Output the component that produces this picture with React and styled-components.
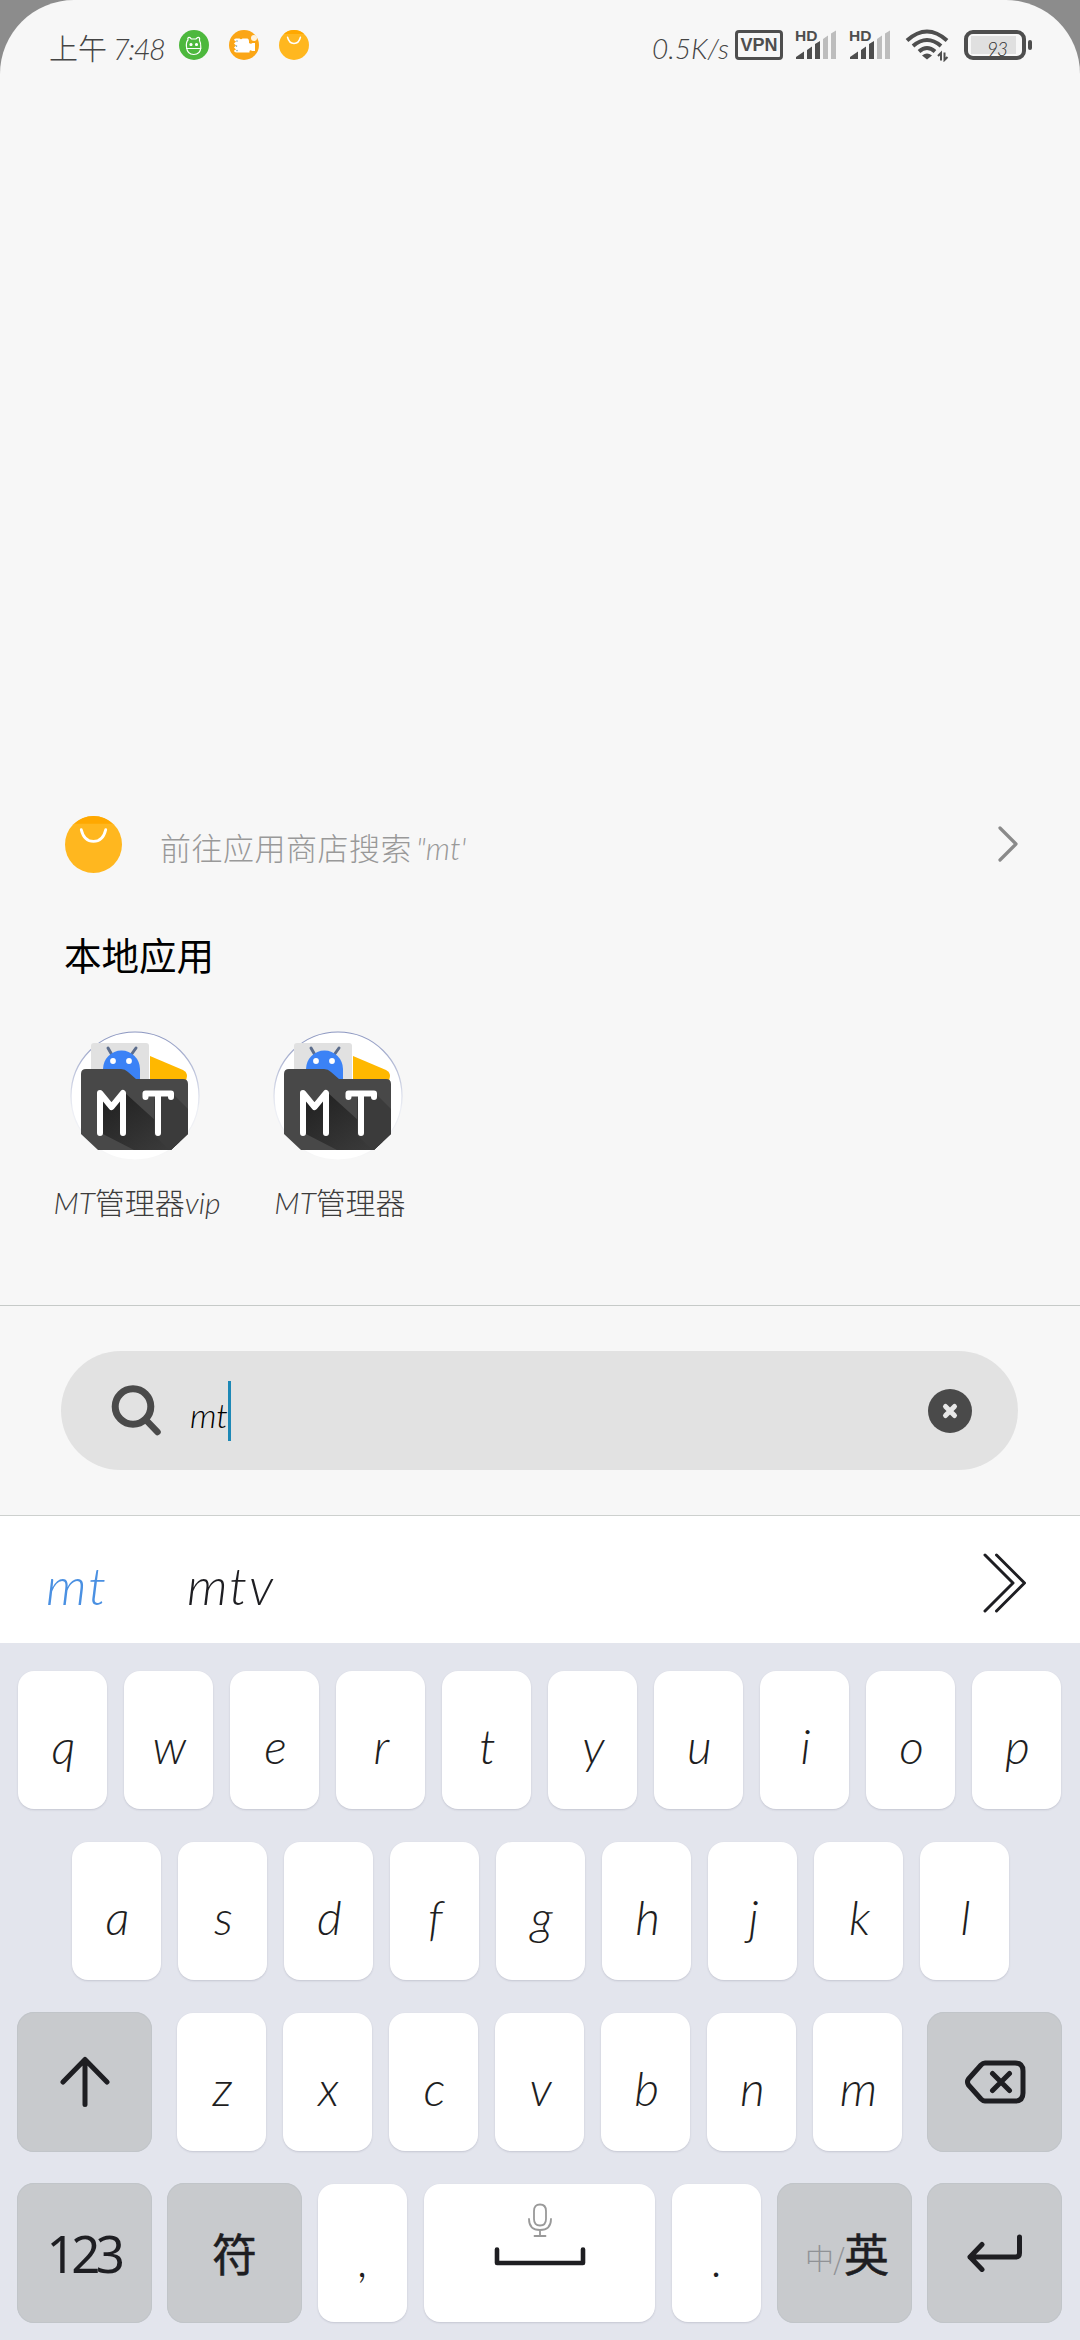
import React from "react";
import styled, { createGlobalStyle } from "styled-components";

const INK = "#1e1e22";
const STATUS = "#4e4e4e";

const GlobalStyle = createGlobalStyle`
  html, body { margin: 0; background: #8c8c8c; }
  * { box-sizing: border-box; }
  svg { display: block; flex: none; }
`;

const Screen = styled.main`
  width: 1080px;
  height: 2340px;
  display: flex;
  flex-direction: column;
  overflow: hidden;
  background: #f7f7f7;
  border-radius: 74px 74px 0 0;
  font-family: Lato, "Noto Sans CJK SC", sans-serif;
  font-weight: 300;
`;

/* Latin runs lean like handwriting, Chinese runs stay upright */
const Slant = styled.span`
  font-style: italic;
  letter-spacing: ${(p) => p.$track || 0}px;
  margin-left: ${(p) => p.$lead || 0}px;
`;

/* ---------- status bar ---------- */
const StatusBar = styled.header`
  height: 90px;
  padding: 0 48px 0 49px;
  display: flex;
  align-items: center;
  justify-content: space-between;
  color: #444;
`;
const StatusGroup = styled.div`
  display: flex;
  align-items: center;
`;
const Clock = styled.div`
  width: 130px;
  padding-top: 8px;
  font-size: 29px;
  line-height: 40px;
  white-space: nowrap;
`;
const Badges = styled.div`
  display: flex;
  gap: 20px;
`;
const Speed = styled.div`
  width: 83px;
  padding-top: 6px;
  font-size: 28px;
  line-height: 40px;
  white-space: nowrap;
`;
const Vpn = styled.div`
  width: 48px;
  height: 30px;
  margin-right: 12px;
  border: 3px solid ${STATUS};
  border-radius: 4px;
  display: flex;
  align-items: center;
  justify-content: center;
  color: ${STATUS};
  font: 700 18px/20px "Liberation Sans", sans-serif;
`;
const SignalBox = styled.div`
  width: 42px;
  height: 30px;
  margin-right: 12px;
  display: grid;
  & > * { grid-area: 1 / 1; }
`;
const Hd = styled.span`
  color: ${STATUS};
  font: 700 15.5px/11px "Liberation Sans", sans-serif;
`;
const Battery = styled.div`
  width: 62px;
  height: 30px;
  margin-left: 15px;
  padding: 2px 3px;
  border: 4px solid ${STATUS};
  border-radius: 9px;
`;
const Charge = styled.div`
  width: 45px;
  height: 18px;
  background: #e0e0e0;
  padding: 5px 0 0 16px;
  font-size: 19px;
  line-height: 16px;
  color: #333;
`;
const BatteryTip = styled.div`
  width: 4px;
  height: 10px;
  margin-left: 2px;
  border-radius: 2px;
  background: ${STATUS};
`;

/* ---------- results ---------- */
const Results = styled.section`
  height: 1215px;
  display: flex;
  flex-direction: column;
  justify-content: flex-end;
  padding: 0 61px 84px 65px;
`;
const StoreRow = styled.div`
  height: 58px;
  display: flex;
  align-items: center;
`;
const StoreText = styled.div`
  flex: 1;
  padding: 8px 0 0 38px;
  font-size: 31px;
  line-height: 44px;
  letter-spacing: 0.5px;
  color: #999;
`;
const Heading = styled.h2`
  margin: 59px 0 0 -1px;
  font-size: 37.5px;
  line-height: 48px;
  font-weight: 400;
  color: #000;
`;
const AppGrid = styled.div`
  display: flex;
  margin: 51px 0 0 -32px;
`;
const AppCell = styled.div`
  width: 203px;
  display: flex;
  flex-direction: column;
  align-items: center;
`;
const AppLabel = styled.div`
  margin-top: 22px;
  padding-left: 5px;
  font-size: 30px;
  line-height: 38px;
  color: #3c3c3c;
  white-space: nowrap;
`;

/* ---------- search ---------- */
const SearchArea = styled.section`
  height: 211px;
  padding: 45px 62px 0 61px;
  border-top: 1px solid #c6cac8;
  border-bottom: 1px solid #cdd0ce;
`;
const SearchPill = styled.div`
  height: 119px;
  border-radius: 60px;
  padding: 0 46px 0 50px;
  display: flex;
  align-items: center;
  background: #e2e2e2;
`;
const Query = styled.div`
  flex: 1;
  display: flex;
  align-items: center;
  padding-left: 29px;
  color: #000;
`;
const QueryText = styled.span`
  width: 38px;
  padding-top: 8px;
  font-size: 34px;
  line-height: 40px;
  font-style: italic;
`;
const Caret = styled.span`
  width: 3px;
  height: 60px;
  background: #1d88b6;
`;

/* ---------- keyboard ---------- */
const Candidates = styled.div`
  height: 127px;
  padding: 0 52px 0 46px;
  display: flex;
  align-items: center;
  background: #fff;
`;
const Candidate = styled.span`
  width: ${(p) => p.$w}px;
  padding-top: 11px;
  font-size: 52px;
  line-height: 60px;
  font-style: italic;
  letter-spacing: 2px;
  color: ${(p) => (p.$active ? "#4a90e2" : INK)};
`;
const More = styled.span`
  margin: 7px 0 0 auto;
`;
const Keyboard = styled.section`
  flex: 1;
  padding-top: 27px;
  display: flex;
  flex-direction: column;
  gap: 31px;
  background: #e3e5ed;
`;
const Row = styled.div`
  height: 140px;
  padding-left: ${(p) => p.$inset || 17}px;
  display: flex;
  align-items: center;
  gap: 15px;
`;
const Key = styled.div`
  width: ${(p) => p.$w || 89}px;
  height: 138px;
  margin: 0 1px;
  padding: 11px 0 0 2px;
  display: flex;
  align-items: center;
  justify-content: center;
  border-radius: 16px;
  background: #fff;
  box-shadow: 0 1px 2px rgba(60, 60, 90, 0.18);
  color: ${INK};
  font-size: 48px;
  line-height: 60px;
  font-style: italic;
`;
const SpaceKey = styled(Key)`
  padding: 19px 0 0;
  flex-direction: column;
  justify-content: flex-start;
  gap: 9px;
`;
const FnKey = styled.div`
  width: 135px;
  height: 140px;
  margin: 0 ${(p) => p.$after || 0}px 0 ${(p) => p.$before || 0}px;
  display: flex;
  align-items: center;
  justify-content: center;
  border-radius: 17px;
  background: #c8cacd;
  box-shadow: inset 0 0 0 1px #c1c5c9;
  color: ${INK};
`;
const Digits = styled.span`
  margin-right: 2px;
  font: 400 51px/60px "Noto Sans", sans-serif;
  letter-spacing: -4.500px;
`;
const Hanzi = styled.span`
  font: 400 45px/60px "Noto Sans CJK SC", sans-serif;
  -webkit-text-stroke: 0.5px ${INK};
`;
const Other = styled.span`
  margin-left: 5px;
  padding-top: 7px;
  font: 300 29px/50px "Noto Sans CJK SC", sans-serif;
  letter-spacing: -0.800px;
  color: #909296;
`;

function MonsterBadge() {
  return (
    <svg width="30" height="30" viewBox="0 0 30 30" fill="none" stroke="#fff" strokeWidth="1.2">
      <circle cx="15" cy="15" r="15" fill="#4db83d" stroke="none" />
      <path d="M7.5 17C7 13 8 11 9 10L8.8 8.2Q9.5 7 11 7.6L12.3 9H17L18.5 7.6Q20 7 20.6 8.2L20.5 10.5Q22 13 21.8 17.5C21.5 22 19 24.5 14.7 24.5S8 22 7.5 17ZM7 18.5H22.4" />
      <circle cx="12" cy="14.5" r="1" fill="#fff" />
      <circle cx="17.5" cy="14.5" r="1" fill="#fff" />
    </svg>
  );
}

function PuzzleBadge() {
  return (
    <svg width="30" height="30" viewBox="0 0 30 30">
      <circle cx="15" cy="15" r="15" fill="#fba616" />
      <circle cx="25" cy="8" r="3" fill="#fff3dd" />
      <path d="M5 10Q5 8.500 7 8.500H10.500Q12 10 13.500 8.500H18.500Q20 9 20 11V13Q22 14.500 23.500 13H26V21H23Q21.500 19.500 20.500 21V22.500H7.500Q5 22.500 5 20.500L7 19.500L5 17.500L7 15.500L5 13.500L7 11.500Z" fill="#fff" />
      <path d="M8 11v.1M7.500 16v.1M8 20.500v.1" stroke="#7ea9b5" strokeWidth="1.600" strokeLinecap="round" />
    </svg>
  );
}

function StoreBadge({ size }) {
  return (
    <svg width={size} height={size} viewBox="0 0 56 56" fill="none">
      <circle cx="28" cy="28" r="28" fill="#ffb71f" />
      <path d="M9 7.500A28 28 0 0 1 47 7.500Z" fill="#ffa800" />
      <path d="M16 13.500C18 22 23 25 28 25S38 22 40 13.500" stroke="#fff" strokeWidth="2.800" strokeLinecap="round" />
    </svg>
  );
}

function Signal() {
  return (
    <SignalBox>
      <Hd>HD</Hd>
      <svg width="42" height="30" viewBox="0 0 42 30">
        <path fill={STATUS} d="M1 29V27L9 21.500V29ZM12 29V20L17 16.500V29ZM20 29V14L25 11V29Z" />
        <path fill="#bdbdbd" d="M28 29V9L33 5.500V29ZM36 29V3.500L41 .5V29Z" />
      </svg>
    </SignalBox>
  );
}

function Wifi() {
  return (
    <svg width="46" height="34" viewBox="-2 0 46 34" fill="none" stroke={STATUS} strokeWidth="4">
      <path d="M2 12.500Q22-5.500 42 12.500M8 18Q22 6 36 18M14 23.500Q22 16.500 30 23.500" />
      <path d="M22 31.500L17 27.500Q22 23.500 27 27.500Z" fill={STATUS} stroke="none" />
      <path d="M36 32.500V25L33 28M39.500 24.500V32L42.500 29" strokeWidth="2" />
    </svg>
  );
}

function AppIcon({ id }) {
  return (
    <svg width="130" height="130" viewBox="0 0 130 130">
      <defs>
        <linearGradient id={`${id}-shade`} x1="0" y1="0" x2="1" y2="1">
          <stop offset="0" stopColor="#1f1f1f" />
          <stop offset="1" stopColor="#3e3e3e" />
        </linearGradient>
        <linearGradient id={`${id}-rim`} x1="0" y1="0" x2="0" y2="1">
          <stop offset="0" stopColor="#8b96c0" />
          <stop offset=".6" stopColor="#eceef4" />
          <stop offset="1" stopColor="#f7f7f7" />
        </linearGradient>
        <clipPath id={`${id}-body`}>
          <path d="M11 43Q11 38 16 38H51Q55 38 58 41L66 48H113Q118 48 118 53V103L101 119H28L11 103Z" />
        </clipPath>
      </defs>
      <circle cx="65" cy="65" r="64" fill="#fff" stroke={`url(#${id}-rim)`} strokeWidth="1.200" />
      <path d="M21 15Q21 12 24 12H76Q79 12 79 15V55H21Z" fill="#e1e1e1" />
      <path d="M80 25L113 39Q117 41 117 45L116 50H80Z" fill="#ffb800" />
      <path d="M38 17L42 24M66 17L61 24" stroke="#5c6d8c" strokeWidth="3" strokeLinecap="round" />
      <path d="M33 48V38A18.500 18.500 0 0 1 70 38V50H33Z" fill="#3b82f6" />
      <circle cx="43" cy="30" r="2.900" fill="#fff" />
      <circle cx="59" cy="30" r="2.900" fill="#fff" />
      <path d="M11 43Q11 38 16 38H51Q55 38 58 41L66 48H113Q118 48 118 53V103L101 119H28L11 103Z" fill="#484848" />
      <g clipPath={`url(#${id}-body)`}>
        <path d="M54 61L118 119H64L29 101V65L40 78Z" fill={`url(#${id}-shade)`} />
        <path d="M101 61L125 85V125H105L84 104V68Z" fill="#3b3b3b" />
      </g>
      <path d="M30 102V62L41.500 76L53 62V102" fill="none" stroke="#fff" strokeWidth="6" strokeLinecap="round" strokeLinejoin="round" />
      <path d="M75.500 66V62.500H101V66M88 63V102" fill="none" stroke="#fff" strokeWidth="6" strokeLinecap="round" strokeLinejoin="round" />
    </svg>
  );
}

function Stroke({ w, h, d, width = 5, color = INK }) {
  return (
    <svg width={w} height={h} viewBox={`0 0 ${w} ${h}`} fill="none" stroke={color} strokeWidth={width} strokeLinecap="round" strokeLinejoin="round">
      <path d={d} />
    </svg>
  );
}

const Letters = ({ text }) => [...text].map((c) => <Key key={c}>{c}</Key>);

export default function App() {
  return (
    <>
      <GlobalStyle />
      <Screen>
        <StatusBar>
          <StatusGroup>
            <Clock>上午<Slant $lead={6} $track={-1.5}>7:48</Slant></Clock>
            <Badges>
              <MonsterBadge />
              <PuzzleBadge />
              <StoreBadge size={30} />
            </Badges>
          </StatusGroup>
          <StatusGroup>
            <Speed><Slant>0.5K/s</Slant></Speed>
            <Vpn>VPN</Vpn>
            <Signal />
            <Signal />
            <Wifi />
            <Battery><Charge><Slant $track={-1}>93</Slant></Charge></Battery>
            <BatteryTip />
          </StatusGroup>
        </StatusBar>

        <Results>
          <StoreRow>
            <StoreBadge size={57} />
            <StoreText>前往应用商店搜索<Slant $lead={4}>"mt'</Slant></StoreText>
            <Stroke w={22} h={38} d="M3 3L19 19L3 35" width={3.2} color="#8a8a8a" />
          </StoreRow>
          <Heading>本地应用</Heading>
          <AppGrid>
            <AppCell>
              <AppIcon id="vip" />
              <AppLabel><Slant>MT</Slant>管理器<Slant>vip</Slant></AppLabel>
            </AppCell>
            <AppCell>
              <AppIcon id="std" />
              <AppLabel><Slant>MT</Slant>管理器</AppLabel>
            </AppCell>
          </AppGrid>
        </Results>

        <SearchArea>
          <SearchPill>
            <svg width="50" height="52" viewBox="0 0 50 52" fill="none" stroke="#4a4a4a" strokeLinecap="round">
              <circle cx="22" cy="21.500" r="17.800" strokeWidth="7" />
              <path d="M35 35L46.500 47" strokeWidth="6.500" />
            </svg>
            <Query>
              <QueryText>mt</QueryText>
              <Caret />
            </Query>
            <svg width="44" height="44" viewBox="0 0 44 44">
              <circle cx="22" cy="22" r="22" fill="#4a4a4a" />
              <path d="M17.500 17.500L26.500 26.500M26.500 17.500L17.500 26.500" stroke="#e8e8e8" strokeWidth="5" strokeLinecap="round" />
            </svg>
          </SearchPill>
        </SearchArea>

        <Candidates>
          <Candidate $w={141} $active>mt</Candidate>
          <Candidate $w={100}>mtv</Candidate>
          <More>
            <Stroke w={46} h={62} d="M3 3L31 31L3 59M14.500 3L42.500 31L14.500 59" width={3} />
          </More>
        </Candidates>

        <Keyboard>
          <Row><Letters text="qwertyuiop" /></Row>
          <Row $inset={71}><Letters text="asdfghjkl" /></Row>
          <Row>
            <FnKey $after={9}><Stroke w={50} h={52} d="M25 48.500V3.500M3 26L25 3.500L47 26" /></FnKey>
            <Letters text="zxcvbnm" />
            <FnKey $before={9}>
              <Stroke w={62} h={46} d="M21 4H51Q59 4 59 12V34Q59 42 51 42H21Q19 42 17 40L4.500 26Q2.500 23 4.500 20L17 6Q19 4 21 4ZM28.500 14.500L45.500 31.500M45.500 14.500L28.500 31.500" />
            </FnKey>
          </Row>
          <Row>
            <FnKey><Digits>123</Digits></FnKey>
            <FnKey><Hanzi>符</Hanzi></FnKey>
            <Key>,</Key>
            <SpaceKey $w={231}>
              <Stroke w={26} h={35} d="M13 1.500Q19 1.500 19 8V16Q19 22.500 13 22.500T7 16V8Q7 1.500 13 1.500ZM2 16Q2 27 13 27T24 16M13 27V33M7.500 33H18.500" width={1.8} color="#999" />
              <Stroke w={92} h={19} d="M3 2.500V16H89V2.500" width={4.6} />
            </SpaceKey>
            <Key>.</Key>
            <FnKey><Other>中/</Other><Hanzi>英</Hanzi></FnKey>
            <FnKey><Stroke w={58} h={38} d="M53.500 3V19Q53.500 23 49.500 23H4M16 10.500L4 23L16 35.500" /></FnKey>
          </Row>
        </Keyboard>
      </Screen>
    </>
  );
}
